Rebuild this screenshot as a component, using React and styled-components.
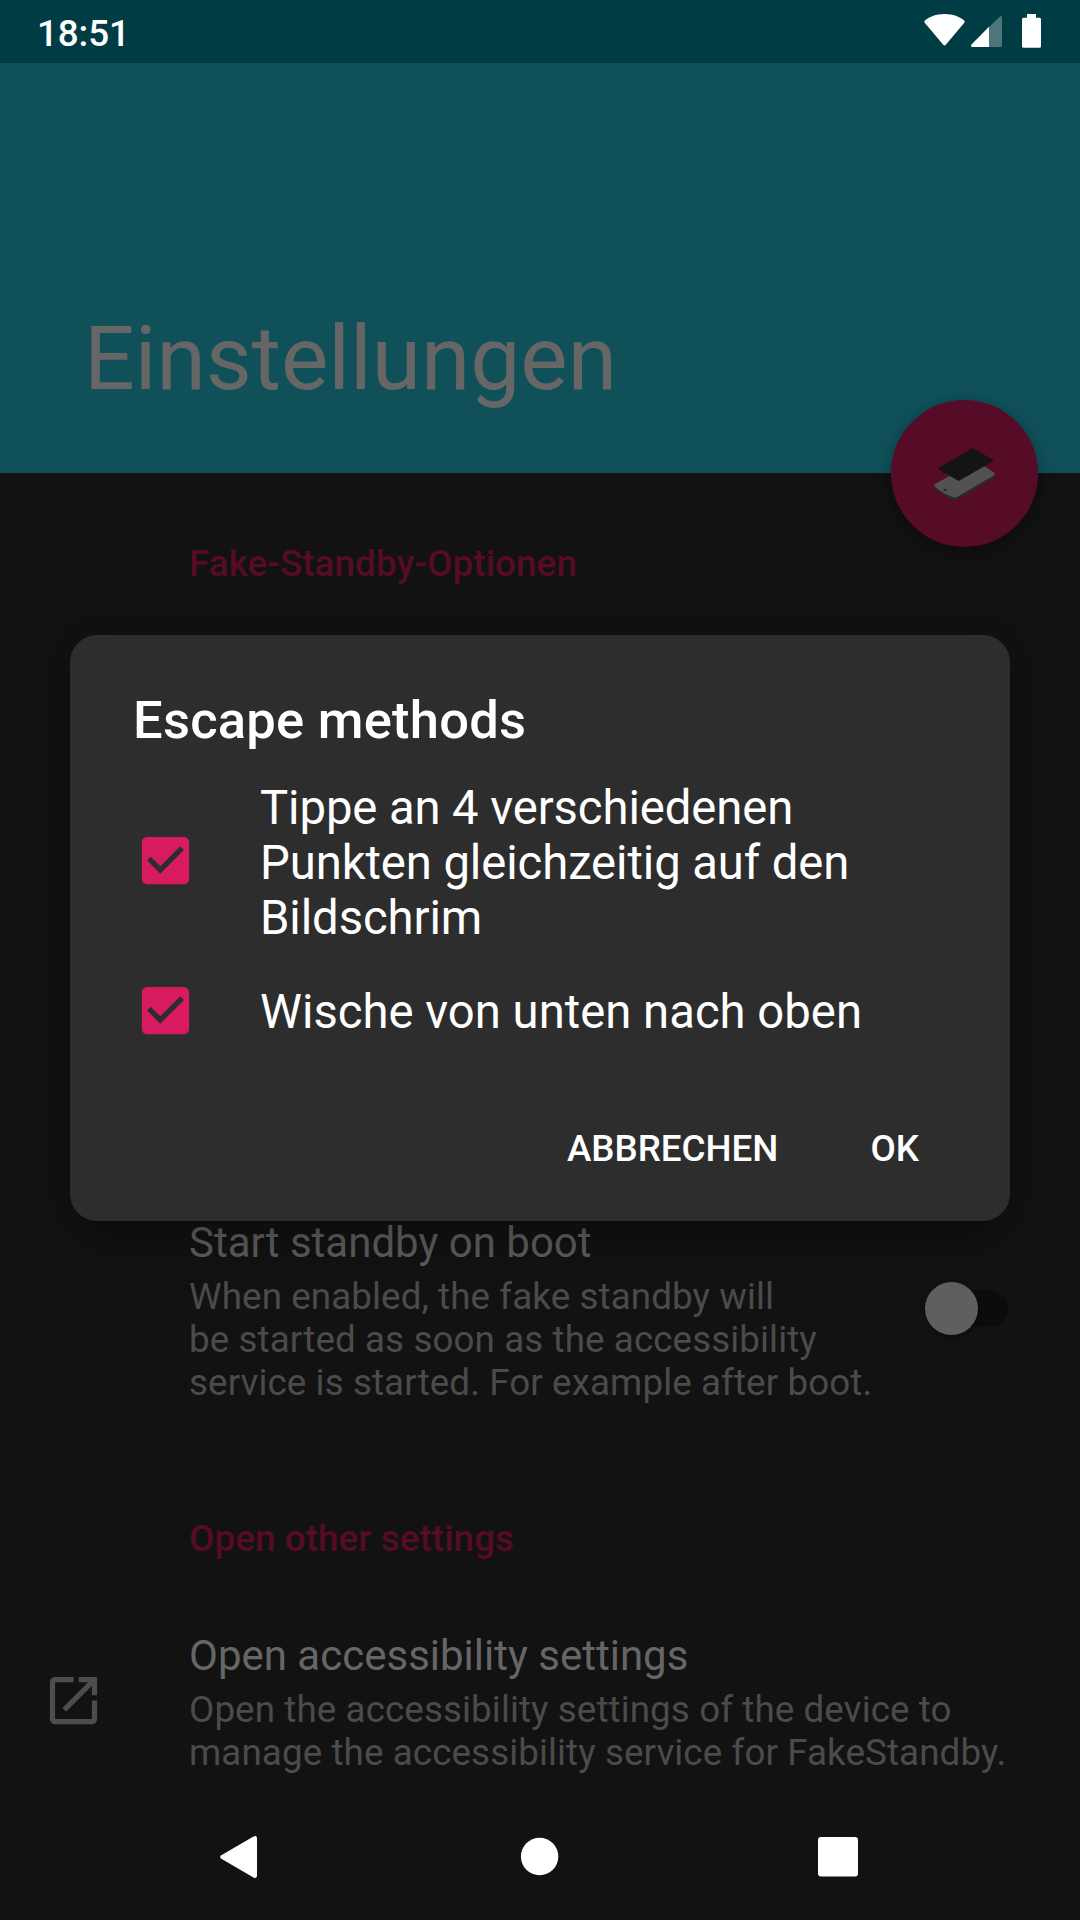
import React, { useState } from "react";
import styled, { createGlobalStyle } from "styled-components";

const GlobalStyle = createGlobalStyle`
  * { box-sizing: border-box; }
  body { margin: 0; background: #121212; font-family: Roboto, "Noto Sans", sans-serif; }
  h1, h2, h3, p { margin: 0; font-weight: 400; }
  svg { display: block; flex: none; }
`;

const Screen = styled.div`
  position: relative;
  width: 1080px;
  height: 1920px;
  overflow: hidden;
  display: flex;
  flex-direction: column;
  background: #121212;
`;

const StatusBar = styled.div`
  flex: none;
  height: 63px;
  padding: 12px 39px 0 37px;
  display: flex;
  justify-content: space-between;
  align-items: flex-start;
  background: #003c44;
`;

const Clock = styled.span`
  font-size: 36.75px;
  line-height: 43px;
  font-weight: 500;
  letter-spacing: -0.1px;
  color: #fff;
`;

const Header = styled.header`
  position: relative;
  flex: none;
  height: 410px;
  padding: 0 84px 62px;
  display: flex;
  align-items: flex-end;
  background: #105059;
`;

const PageTitle = styled.h1`
  font-size: 89.25px;
  line-height: 105px;
  color: #666;
`;

const Fab = styled.button`
  position: absolute;
  right: 42px;
  bottom: -74px;
  width: 147px;
  height: 147px;
  padding: 0;
  border: 0;
  border-radius: 50%;
  background: #560b26;
  box-shadow: 0 8px 18px rgba(0, 0, 0, 0.22), 0 0 8px rgba(0, 0, 0, 0.12);
`;

const Content = styled.main`
  flex: 1;
  display: flex;
  flex-direction: column;
  padding-top: 69px;
`;

const Category = styled.h2`
  padding-left: 189px;
  font-size: 36.75px;
  line-height: 43px;
  font-weight: 500;
  letter-spacing: 0.1px;
  color: #560b26;
`;

const Preference = styled.section`
  display: grid;
  grid-template-columns: 147px 1fr auto;
  padding: 0 72px 0 42px;
  margin: ${(p) => p.$before}px 0 ${(p) => p.$after || 0}px;
`;

const IconFrame = styled.div`
  padding-top: 38px;
  color: #4d4d4d;
`;

const PreferenceTitle = styled.h3`
  font-size: 42px;
  line-height: 49px;
  color: ${(p) => (p.$shaded ? "#5c5c5c" : "#666")};
`;

const Summary = styled.p`
  margin-top: 8px;
  font-size: 36.75px;
  line-height: 43px;
  letter-spacing: 0.1px;
  color: #4b4b4b;
  white-space: pre;
`;

const Switch = styled.div`
  align-self: start;
  display: flex;
  align-items: center;
  width: 75px;
  height: 37px;
  margin: 72px 0 0;
  border-radius: 19px;
  background: #0c0c0c;
`;

const Thumb = styled.div`
  flex: none;
  width: 53px;
  height: 53px;
  margin-left: -8px;
  border-radius: 50%;
  background: #5f5f5f;
  box-shadow: 0 3px 5px rgba(0, 0, 0, 0.3);
`;

const NavBar = styled.nav`
  flex: none;
  height: 126px;
  padding: 0 210px 2px 207px;
  display: flex;
  justify-content: space-between;
  align-items: center;
`;

const Overlay = styled.div`
  position: absolute;
  inset: 0;
  padding: 635px 70px 0;
`;

const Dialog = styled.div`
  height: 586px;
  padding: 54px 63px 51px;
  display: flex;
  flex-direction: column;
  border-radius: 27px;
  background: #2d2d2d;
  box-shadow: 0 22px 50px rgba(0, 0, 0, 0.22), 0 0 22px rgba(0, 0, 0, 0.12);
`;

const DialogTitle = styled.h2`
  font-size: 52.5px;
  line-height: 62px;
  font-weight: 500;
  letter-spacing: 0.24px;
  color: #fff;
`;

const Choices = styled.div`
  display: flex;
  flex-direction: column;
  gap: 39px;
  margin-top: 30px;
`;

const Choice = styled.div`
  display: flex;
  align-items: center;
  gap: 63.4px;
  padding-left: 0.6px;
  font-size: 47.25px;
  line-height: 55px;
  letter-spacing: ${(p) => p.$tracking}px;
  color: #fff;
  white-space: pre;
`;

const CheckSlot = styled.div`
  display: flex;
  align-items: center;
  height: 55px;
  padding-bottom: ${(p) => p.$lift}px;
`;

const Actions = styled.div`
  display: flex;
  justify-content: flex-end;
  gap: 92px;
  margin-top: auto;
  padding-right: 28px;
`;

const Action = styled.button`
  padding: 0;
  border: 0;
  background: none;
  font: 500 36.75px/43px Roboto, sans-serif;
  color: #fff;
`;

const StatusIcons = () => (
  <svg width="117" height="36" viewBox="924 12 117 36" fill="#fff">
    <path d="M944.5 14C936 14 929.7 16.8 925 20.3Q923.8 21.5 924.9 22.9L943 44.6Q944.5 46.3 946 44.6L964.1 22.9Q965.2 21.5 964 20.3C959.3 16.8 953 14 944.5 14Z" />
    <path d="M989 27L1000 16.4Q1002 15.4 1002 17.5V45.5Q1002 47 1000.5 47H989Z" fillOpacity=".3" />
    <path d="M989 26.8V47H972.2Q970.2 46.4 971.5 44.4Z" />
    <path d="M1027 14H1036V17.7H1039.5Q1041 17.7 1041 19.2V46.3Q1041 47.8 1039.5 47.8H1023.5Q1022 47.8 1022 46.3V19.2Q1022 17.7 1023.5 17.7H1027Z" />
  </svg>
);

const PhoneIcon = () => (
  <svg width="147" height="147" viewBox="93 60 441 441">
    <path d="M222 314Q219 321 226 327Q248 348 282 361Q288 363 294 358L402 293Q407 289 405 281L286 350Z" fill="#2b2b2b" />
    <path d="M224 313L345 246L376 260L403 278Q407 282 402 286L292 350Q286 354 279 351Q246 339 225 320Q220 316 224 313Z" fill="#525252" />
    <ellipse cx="256" cy="330" rx="6" ry="3.5" fill="#303030" />
    <path d="M234 265L334 206Q338 204 342 207L400 240Q402 242 399 244L300 301Q296 304 292 301L235 268Q232 267 234 265Z" fill="#141414" />
  </svg>
);

const OpenIcon = () => (
  <svg width="63" height="63" viewBox="0 0 24 24" fill="currentColor">
    <path d="M19 19H5V5h7V3H5c-1.11 0-2 .9-2 2v14c0 1.1.89 2 2 2h14c1.1 0 2-.9 2-2v-7h-2v7zM14 3v2h3.59l-9.83 9.83 1.41 1.41L19 6.41V10h2V3h-7z" />
  </svg>
);

const CheckIcon = () => (
  <svg width="63" height="63" viewBox="0 0 24 24" fill="#d81b60">
    <path d="M19 3H5c-1.11 0-2 .9-2 2v14c0 1.1.89 2 2 2h14c1.11 0 2-.9 2-2V5c0-1.1-.89-2-2-2zm-9 14l-5-5 1.41-1.41L10 14.17l7.59-7.59L19 8l-9 9z" />
  </svg>
);

const BackIcon = () => (
  <svg width="63" height="63" viewBox="207 1825 63 63" fill="#fff">
    <path d="M221.3 1855.2L253.5 1836.6Q257 1835 257 1838.5V1875.5Q257 1879 253.5 1877.4L221.3 1858.8Q219 1857 221.3 1855.2Z" />
  </svg>
);

const HomeIcon = () => (
  <svg width="63" height="63" viewBox="0 0 63 63" fill="#fff">
    <circle cx="32.6" cy="31.5" r="18.7" />
  </svg>
);

const RecentsIcon = () => (
  <svg width="63" height="63" viewBox="0 0 63 63" fill="#fff">
    <rect x="11" y="12" width="40" height="39.5" rx="3" />
  </svg>
);

const METHODS = [
  {
    label: "Tippe an 4 verschiedenen\nPunkten gleichzeitig auf den\nBildschrim",
    lift: 7,
    tracking: -0.1,
  },
  { label: "Wische von unten nach oben", lift: 5, tracking: 0 },
];

export default function App() {
  const [checked, setChecked] = useState([true, true]);
  const toggle = (i) => setChecked((c) => c.map((v, n) => (n === i ? !v : v)));

  return (
    <Screen>
      <GlobalStyle />
      <StatusBar>
        <Clock>18:51</Clock>
        <StatusIcons />
      </StatusBar>
      <Header>
        <PageTitle>Einstellungen</PageTitle>
        <Fab aria-label="Standby">
          <PhoneIcon />
        </Fab>
      </Header>
      <Content>
        <Category>Fake-Standby-Optionen</Category>
        <Preference $before={633} $after={113}>
          <div />
          <div>
            <PreferenceTitle $shaded>Start standby on boot</PreferenceTitle>
            <Summary>
              {"When enabled, the fake standby will\nbe started as soon as the accessibility\nservice is started. For example after boot."}
            </Summary>
          </div>
          <Switch>
            <Thumb />
          </Switch>
        </Preference>
        <Category>Open other settings</Category>
        <Preference $before={71}>
          <IconFrame>
            <OpenIcon />
          </IconFrame>
          <div>
            <PreferenceTitle>Open accessibility settings</PreferenceTitle>
            <Summary>
              {"Open the accessibility settings of the device to\nmanage the accessibility service for FakeStandby."}
            </Summary>
          </div>
        </Preference>
      </Content>
      <NavBar>
        <BackIcon />
        <HomeIcon />
        <RecentsIcon />
      </NavBar>
      <Overlay>
        <Dialog role="dialog">
          <DialogTitle>Escape methods</DialogTitle>
          <Choices>
            {METHODS.map((m, i) => (
              <Choice key={m.label} $tracking={m.tracking} onClick={() => toggle(i)}>
                <CheckSlot $lift={m.lift}>{checked[i] && <CheckIcon />}</CheckSlot>
                <span>{m.label}</span>
              </Choice>
            ))}
          </Choices>
          <Actions>
            <Action>ABBRECHEN</Action>
            <Action>OK</Action>
          </Actions>
        </Dialog>
      </Overlay>
    </Screen>
  );
}
